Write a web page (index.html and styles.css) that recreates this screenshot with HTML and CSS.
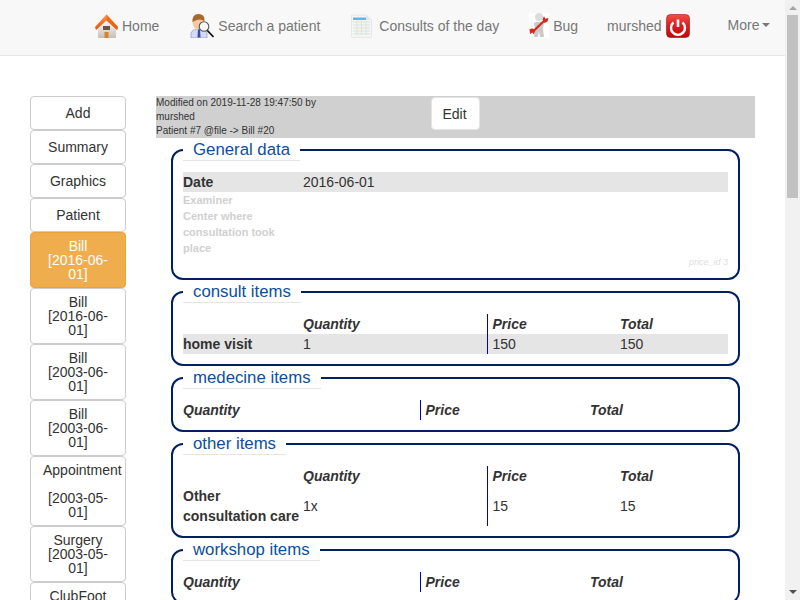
FILE: index.html
```html
<!DOCTYPE html>
<html lang="en">
<head>
<meta charset="utf-8">
<title>Bill</title>
<link rel="stylesheet" href="styles.css">
</head>
<body>
<nav class="navbar">
  <a class="nav-item nav-home" href="#">
    <svg class="icon" width="24" height="24" viewBox="0 0 24 24"><defs><linearGradient id="roof" x1="0" y1="0" x2="0" y2="1"><stop offset="0" stop-color="#ff9a50"/><stop offset="1" stop-color="#e8500c"/></linearGradient><linearGradient id="wall" x1="0" y1="0" x2="0" y2="1"><stop offset="0" stop-color="#fff"/><stop offset="1" stop-color="#c4c0b8"/></linearGradient></defs><path d="M3 12 L11.500 5 L21 12 V24 H3 Z" fill="url(#wall)"/><path d="M11.500 .5 L23 13 L22 16 L11.500 6.500 L1 16 L0 13 Z" fill="url(#roof)"/><path d="M11.500 .5 L23 13 L22 16 L11.500 6.500 Z" fill="#f0600f" opacity=".7"/><rect x="9.500" y="18" width="4" height="6" fill="#d9822b"/><rect x="8" y="12" width="7" height="4" fill="#6a5845"/></svg>
    <span>Home</span>
  </a>
  <a class="nav-item nav-search" href="#">
    <svg class="icon" width="24" height="25" viewBox="0 0 24 25"><path d="M1 25 V20 Q2 16.500 9 15.500 Q16 16.500 17 20 V25 Z" fill="#d6dbf5" stroke="#7f86c8" stroke-width=".6"/><path d="M8 16 H10 L10.500 24.500 H7.500 Z" fill="#3a48b0"/><ellipse cx="8.500" cy="9" rx="6" ry="7.500" fill="#f2c9a0"/><path d="M2.500 9 Q2 1 8.500 1 Q15 1 14.500 8 Q9 4.500 2.500 9 Z" fill="#a86a2c"/><line x1="15" y1="15" x2="23.500" y2="24" stroke="#111" stroke-width="1.800"/><circle cx="14" cy="13.500" r="4.800" fill="#f4f8fb" stroke="#555" stroke-width="1.100"/></svg>
    <span>Search a patient</span>
  </a>
  <a class="nav-item nav-consult" href="#">
    <svg class="icon" width="24" height="24" viewBox="0 0 24 24"><path d="M1.500 1 H16 L21.500 6 V23.500 H1.500 Z" fill="#f4f6f6" stroke="#e0e3e4" stroke-width=".8"/><path d="M16 1 V6 H21.500 Z" fill="#e2e6e8"/><rect x="3" y="3.500" width="13" height="2.500" fill="#5ab8ee"/><path d="M3 8 H20 M3 11 H20 M3 14 H20 M3 17 H20 M3 20 H20 M7 6.500 V21 M11.500 6.500 V21 M16 6.500 V21" stroke="#dde3d8" stroke-width="1" fill="none"/></svg>
    <span>Consults of the day</span>
  </a>
  <a class="nav-item nav-bug" href="#">
    <svg class="icon" width="20" height="25" viewBox="0 0 20 25"><rect width="20" height="25" fill="#fff"/><circle cx="10" cy="4" r="4" fill="#dcdcdc"/><path d="M5 10 Q10 7.500 15 10 L14 16 L15 24 H11 L10 18 L9 24 H5 L6 16 Z" fill="#cacaca"/><path d="M15.500 7.500 L4 18.500" stroke="#d42a1c" stroke-width="2.200"/><path d="M13.500 6.500 L15 3 L16.200 5.800 L19.500 5 L18.500 8.500 L15.500 10 Z" fill="#d42a1c"/><path d="M.5 16 L4 15.500 L6 18 L5 21.500 L3.500 19.500 L1 21 Z" fill="#d42a1c"/></svg>
    <span>Bug</span>
  </a>
  <a class="nav-item nav-user" href="#">
    <span>murshed</span>
    <svg class="icon" width="24" height="24" viewBox="0 0 24 24"><defs><linearGradient id="pow" x1="0" y1="0" x2="0" y2="1"><stop offset="0" stop-color="#f0504a"/><stop offset=".5" stop-color="#dc1c1c"/><stop offset="1" stop-color="#b80c10"/></linearGradient></defs><rect x=".5" y=".5" width="23" height="23" rx="4" fill="url(#pow)" stroke="#a01014" stroke-width=".6"/><path d="M7.500 8.500 A7 7 0 1 0 16.500 8.500" fill="none" stroke="#fff" stroke-width="2.400"/><line x1="12" y1="5.500" x2="12" y2="13" stroke="#fff" stroke-width="2.600"/></svg>
  </a>
  <a class="nav-item nav-more" href="#">More<span class="caret"></span></a>
</nav>

<div class="page">
  <aside class="sidebar">
    <a class="side-btn" href="#">Add</a>
    <a class="side-btn" href="#">Summary</a>
    <a class="side-btn" href="#">Graphics</a>
    <a class="side-btn" href="#">Patient</a>
    <a class="side-btn side-active" href="#"><span>Bill<br>[2016-06-01]</span></a>
    <a class="side-btn" href="#"><span>Bill<br>[2016-06-01]</span></a>
    <a class="side-btn" href="#"><span>Bill<br>[2003-06-01]</span></a>
    <a class="side-btn" href="#"><span>Bill<br>[2003-06-01]</span></a>
    <a class="side-btn" href="#"><span>Appointment<br><br>[2003-05-01]</span></a>
    <a class="side-btn" href="#"><span>Surgery<br>[2003-05-01]</span></a>
    <a class="side-btn" href="#"><span>ClubFoot<br>[2003-05-01]</span></a>
  </aside>

  <main class="content">
    <header class="record-head">
      <div class="record-info">
        <div class="record-mod">Modified on 2019-11-28 19:47:50 by murshed</div>
        <div>Patient #7 @file -&gt; Bill #20</div>
      </div>
      <button class="edit-btn" type="button">Edit</button>
    </header>

    <fieldset class="group">
      <legend>General data</legend>
      <table class="data general">
        <tr class="row-on"><th>Date</th><td>2016-06-01</td></tr>
        <tr class="row-empty"><th>Examiner</th><td></td></tr>
        <tr class="row-empty"><th>Center where consultation took place</th><td></td></tr>
      </table>
      <div class="price-id">price_id 3</div>
    </fieldset>

    <fieldset class="group">
      <legend>consult items</legend>
      <table class="data items labelled">
        <tr><th class="c-label"></th><th class="c-qty">Quantity</th><th class="c-price">Price</th><th class="c-total">Total</th></tr>
        <tr class="row-on"><th>home visit</th><td>1</td><td class="c-price">150</td><td>150</td></tr>
      </table>
    </fieldset>

    <fieldset class="group">
      <legend>medecine items</legend>
      <table class="data items plain">
        <tr><th class="c-qty">Quantity</th><th class="c-price">Price</th><th class="c-total">Total</th></tr>
      </table>
    </fieldset>

    <fieldset class="group">
      <legend>other items</legend>
      <table class="data items labelled">
        <tr><th class="c-label"></th><th class="c-qty">Quantity</th><th class="c-price">Price</th><th class="c-total">Total</th></tr>
        <tr><th>Other consultation care</th><td>1x</td><td class="c-price">15</td><td>15</td></tr>
      </table>
    </fieldset>

    <fieldset class="group">
      <legend>workshop items</legend>
      <table class="data items plain">
        <tr><th class="c-qty">Quantity</th><th class="c-price">Price</th><th class="c-total">Total</th></tr>
      </table>
    </fieldset>
  </main>
</div>

<div class="scrollbar" aria-hidden="true">
  <span class="arrow arrow-up"></span>
  <span class="thumb"></span>
  <span class="arrow arrow-down"></span>
</div>
</body>
</html>
```
FILE: styles.css
```css
* { box-sizing: border-box; }
html, body { height: 600px; overflow: hidden; }
body {
  margin: 0;
  font-family: "Liberation Sans", Arial, sans-serif;
  font-size: 14px;
  line-height: 20px;
  color: #333;
  background: #fff;
}
a { text-decoration: none; color: inherit; }

.navbar {
  display: flex;
  align-items: center;
  height: 56px;
  padding: 0 0 4px 80px;
  background: #f8f8f8;
  border-bottom: 1px solid #e7e7e7;
  color: #777;
}
.nav-item {
  display: flex;
  align-items: center;
  gap: 4px;
  padding: 0 15px;
}
.icon { display: block; flex: none; }
.nav-home { gap: 3px; }
.nav-search { margin-left: 1px; }
.nav-consult { gap: 5px; }
.nav-user { margin-left: -1px; }
.nav-more { gap: 0; margin-left: 23px; padding: 0; margin-top: -2px; }
.caret {
  width: 0;
  height: 0;
  margin-left: 3px;
  border-top: 4px solid #777;
  border-left: 4px solid transparent;
  border-right: 4px solid transparent;
}

.page {
  display: flex;
  align-items: flex-start;
  padding: 40px 30px 0;
}
.sidebar {
  display: flex;
  flex-direction: column;
  flex: none;
  width: 96px;
}
.side-btn {
  display: flex;
  flex-direction: column;
  justify-content: center;
  min-height: 34px;
  padding: 6px 12px;
  border: 1px solid #ccc;
  border-radius: 4px;
  background: #fff;
  line-height: 14px;
  text-align: center;
}
.side-active {
  background: #f0ad4e;
  border-color: #eea236;
  color: #fff;
}
.content {
  flex: none;
  width: 599px;
  margin-left: 30px;
}
.record-head {
  display: flex;
  align-items: flex-start;
  height: 42px;
  background: #d0d0d0;
  font-size: 10px;
  line-height: 14px;
}
.record-info { width: 275px; }
.record-mod { width: 180px; }
.edit-btn {
  width: 49px;
  height: 33px;
  margin-top: 1px;
  padding: 0 2px 0 0;
  border: 1px solid #e4e4e4;
  border-radius: 4px;
  background: #fff;
  color: #333;
  font: 14px/20px "Liberation Sans", Arial, sans-serif;
}

.group {
  margin: 1px 15px;
  padding: 0 10px 10px;
  min-width: 0;
  border: 2px solid #002060;
  border-radius: 12px;
}
.group legend {
  padding: 0 10px;
  margin: 0;
  font-size: 16.8px;
  line-height: 21px;
  color: #0b4f9e;
  background: #fff;
  border-bottom: 1px solid #e5e5e5;
}
.data {
  width: 100%;
  margin-top: 11px;
  border-collapse: collapse;
  table-layout: fixed;
}
.data th, .data td {
  padding: 0;
  text-align: left;
  vertical-align: middle;
}
.row-on { background: #e5e5e5; }
.general th { width: 120px; }
.row-empty th {
  font-size: 11px;
  line-height: 16px;
  color: #d0d0d0;
}
.price-id {
  height: 12px;
  font-size: 9px;
  line-height: 12px;
  font-style: italic;
  color: #ddd;
  text-align: right;
}
.items th { font-style: italic; }
.items tr > th:first-child:not(.c-qty) { font-style: normal; }
.items .c-label { width: 120px; }
.labelled .c-qty { width: 184px; }
.labelled .c-price { width: 133px; }
.plain .c-qty { width: 237px; }
.plain .c-price { width: 170px; }
.c-price {
  padding-left: 5px !important;
  border-left: 1px solid #0000c8;
}

.scrollbar {
  position: fixed;
  top: 0;
  right: 0;
  bottom: 0;
  width: 15px;
  background: #f1f1f1;
}
.thumb {
  position: absolute;
  top: 15px;
  left: 2px;
  width: 11px;
  height: 183px;
  background: #c1c1c1;
}
.arrow {
  position: absolute;
  left: 4px;
  width: 0;
  height: 0;
  border-left: 4px solid transparent;
  border-right: 4px solid transparent;
}
.arrow-up { top: 6px; border-bottom: 4px solid #a3a3a3; }
.arrow-down { bottom: 6px; border-top: 4px solid #505050; }
```
